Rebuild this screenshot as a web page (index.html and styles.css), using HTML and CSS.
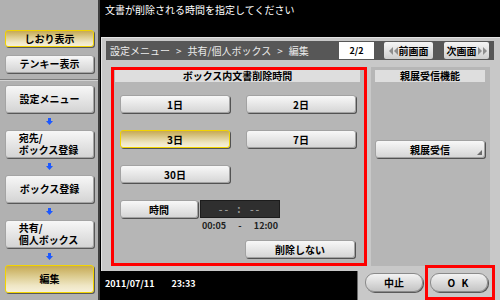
FILE: index.html
```html
<!DOCTYPE html>
<html lang="ja">
<head>
    <meta charset="UTF-8">
    <meta name="viewport" content="width=device-width, initial-scale=1.0">
    <title>ボックス編集</title>
    <link rel="stylesheet" href="styles.css">
</head>
<body>
<div class="screen">
    <div class="side">
        <div class="side-top">
            <div class="sbtn on">しおり表示</div>
            <div class="sbtn">テンキー表示</div>
        </div>
        <div class="side-nav">
            <div class="sbtn step">設定メニュー</div>
            <div class="down"><svg width="7" height="7" viewBox="0 0 7 7"><path d="M2 0h3v3h2L3.5 7 0 3h2z" fill="#1c58ff"/></svg></div>
            <div class="sbtn step two"><div><span>宛先/</span><span>ボックス登録</span></div></div>
            <div class="down"><svg width="7" height="7" viewBox="0 0 7 7"><path d="M2 0h3v3h2L3.5 7 0 3h2z" fill="#1c58ff"/></svg></div>
            <div class="sbtn step">ボックス登録</div>
            <div class="down"><svg width="7" height="7" viewBox="0 0 7 7"><path d="M2 0h3v3h2L3.5 7 0 3h2z" fill="#1c58ff"/></svg></div>
            <div class="sbtn step two"><div><span>共有/</span><span>個人ボックス</span></div></div>
            <div class="down"><svg width="7" height="7" viewBox="0 0 7 7"><path d="M2 0h3v3h2L3.5 7 0 3h2z" fill="#1c58ff"/></svg></div>
            <div class="sbtn step on">編集</div>
        </div>
    </div>

    <div class="main">
        <div class="msg">文書が削除される時間を指定してください</div>

        <div class="panel">
            <div class="head">
                <div class="crumb">設定メニュー<span class="sep">&gt;</span>共有/個人ボックス<span class="sep">&gt;</span>編集</div>
                <div class="page">2/2</div>
                <div class="pbtn prev"><svg width="9" height="8" viewBox="0 0 9 8"><path d="M4 0v8L0 4zM9 0v8L5 4z" fill="#8e8e8e"/></svg>前画面</div>
                <div class="pbtn next">次画面<svg width="9" height="8" viewBox="0 0 9 8"><path d="M0 0v8l4-4zM5 0v8l4-4z" fill="#8e8e8e"/></svg></div>
            </div>

            <div class="body">
                <div class="sec del">
                    <div class="title">ボックス内文書削除時間</div>
                    <div class="opts">
                        <div class="row"><div class="btn">1日</div><div class="btn">2日</div></div>
                        <div class="row"><div class="btn sel">3日</div><div class="btn">7日</div></div>
                        <div class="row"><div class="btn">30日</div></div>
                        <div class="row tight"><div class="btn short">時間</div><div class="clock">-- : --</div></div>
                        <div class="range"><span>00:05</span><span>-</span><span>12:00</span></div>
                        <div class="row end"><div class="btn">削除しない</div></div>
                    </div>
                </div>
                <div class="sec conf">
                    <div class="title">親展受信機能</div>
                    <div class="btn wide more">親展受信</div>
                </div>
            </div>
        </div>

        <div class="foot">
            <div class="status"><span>2011/07/11</span><span>23:33</span></div>
            <div class="actions">
                <div class="pill">中止</div>
                <div class="pill ok">O K</div>
                <div class="mark"></div>
            </div>
        </div>
    </div>
</div>
</body>
</html>
```

FILE: styles.css
```css
*{
    box-sizing: border-box;
    margin: 0;
    padding: 0;
}
body{
    width: 500px;
    height: 300px;
    overflow: hidden;
    background-color: #000;
    font-family: "Noto Sans CJK JP", "Noto Sans", sans-serif;
    font-size: 10px;
    color: #000;
}
.screen{
    display: flex;
    height: 300px;
}

/* left column */
.side{
    width: 100px;
    flex: none;
    background-color: #b1b1b1;
    border-right: 2px solid #3e3e3e;
}
.side-top{
    height: 80px;
    padding: 30px 4px 0 5px;
    display: flex;
    flex-direction: column;
    gap: 8px;
    border-bottom: 1px solid #7a7a7a;
    box-shadow: 0 1px 0 #d2d2d2;
}
.side-nav{
    padding: 5px 4px 0 5px;
    display: flex;
    flex-direction: column;
}
.sbtn{
    height: 18px;
    display: flex;
    justify-content: center;
    align-items: center;
    font-weight: 700;
    line-height: 12px;
    border-radius: 3px;
    background: linear-gradient(#f7f7f7, #d4d4d4);
    border: 1px solid #a4a4a4;
    box-shadow: 1px 1px 0 #585858;
}
.side-top .on{
    height: 17px;
}
.sbtn.step{
    height: 28px;
}
.two div{
    margin-left: -2px;
}
.two span{
    display: block;
    height: 12px;
    overflow: visible;
}
.sbtn.on, .btn.sel{
    background: linear-gradient(#c6a955, #dccc90 40%, #efe6c4 75%, #f6f0da);
    border: 1px solid #f2d400;
}
.down{
    height: 17px;
    display: flex;
    justify-content: center;
    align-items: center;
}

/* main area */
.main{
    flex: 1;
    display: flex;
    flex-direction: column;
}
.msg{
    height: 37px;
    padding: 4px 0 0 5px;
    color: #fff;
    line-height: 12px;
}
.panel{
    height: 234px;
    margin-left: 1px;
    padding: 3px 6px 0 4px;
    background-color: #c8c8c8;
    border-left: 1px solid #e4e4e4;
    border-top: 1px solid #e4e4e4;
}
.head{
    height: 19px;
    display: flex;
    align-items: center;
    padding: 0 5px 0 4px;
    background-color: #575757;
    color: #ececec;
}
.crumb{
    flex: 1;
    line-height: 12px;
}
.sep{
    margin: 0 6px;
}
.page{
    width: 35px;
    height: 17px;
    margin-right: 10px;
    background-color: #fff;
    color: #000;
    text-align: center;
    line-height: 17px;
    font-weight: 700;
    font-size: 9px;
}
.pbtn{
    height: 17px;
    display: flex;
    justify-content: center;
    align-items: center;
    gap: 1px;
    border-radius: 2px;
    background: linear-gradient(#f5f5f5, #cecece);
    color: #000;
    font-weight: 700;
}
.prev{
    width: 49px;
    margin-right: 11px;
}
.next{
    width: 45px;
}

.body{
    height: 199px;
    margin-top: 7px;
    padding: 0 4px 0 5px;
    display: flex;
    gap: 4px;
}
.sec{
    background-color: #b6b6b6;
}
.del{
    width: 256px;
    border: 3px solid #f00;
}
.conf{
    flex: 1;
    padding: 3px 5px 0 4px;
}
.title{
    height: 12px;
    background-color: #dedede;
    text-align: center;
    line-height: 12px;
    font-weight: 700;
}
.del .title{
    margin: 0 4px 0 1px;
}
.opts{
    padding: 13px 0 0 6px;
}
.row{
    display: flex;
    gap: 16px;
    margin-bottom: 17px;
}
.row.tight{
    gap: 2px;
    margin-bottom: 0;
}
.row.end{
    padding-left: 125px;
    margin-top: 8px;
}
.btn{
    width: 110px;
    height: 18px;
    display: flex;
    justify-content: center;
    align-items: center;
    font-weight: 700;
    border-radius: 3px;
    background: linear-gradient(#f8f8f8, #d6d6d6);
    border: 1px solid #a2a2a2;
    box-shadow: 1px 1px 0 #525252;
}
.btn.short{
    width: 78px;
}
.btn.wide{
    margin-top: 58px;
}
.more{
    position: relative;
}
.more::after{
    content: "";
    position: absolute;
    right: 2px;
    bottom: 2px;
    border-left: 5px solid transparent;
    border-bottom: 5px solid #6c6c6c;
}
.clock{
    width: 80px;
    height: 18px;
    background-color: #2f2f2f;
    border: 1px solid #1c1c1c;
    color: #9a9a9a;
    font-weight: 700;
    text-align: center;
    line-height: 16px;
    letter-spacing: 2px;
    word-spacing: 3px;
}
.range{
    width: 80px;
    margin: 2px 0 0 80px;
    padding: 0 2px;
    display: flex;
    justify-content: space-between;
    font-size: 9px;
    font-weight: 700;
    line-height: 12px;
    color: #222;
}

/* bottom */
.foot{
    flex: 1;
    display: flex;
}
.status{
    flex: 1;
    display: flex;
    gap: 17px;
    padding: 7px 0 0 5px;
    color: #fff;
    font-size: 9px;
    font-weight: 700;
    line-height: 12px;
}
.actions{
    width: 143px;
    position: relative;
    display: flex;
    gap: 7px;
    padding: 2px 0 0 7px;
    background-color: #c8c8c8;
    border-left: 1px solid #6a6a6a;
}
.pill{
    width: 58px;
    height: 19px;
    display: flex;
    justify-content: center;
    align-items: center;
    font-weight: 700;
    border-radius: 9px;
    background: linear-gradient(#f3f3f3, #c4c4c4);
    border: 1px solid #8a8a8a;
    box-shadow: 1px 1px 0 #5a5a5a;
}
.ok{
    letter-spacing: 2px;
}
.mark{
    position: absolute;
    left: 67px;
    top: -6px;
    width: 70px;
    height: 35px;
    border: 3px solid #f00;
}
```
